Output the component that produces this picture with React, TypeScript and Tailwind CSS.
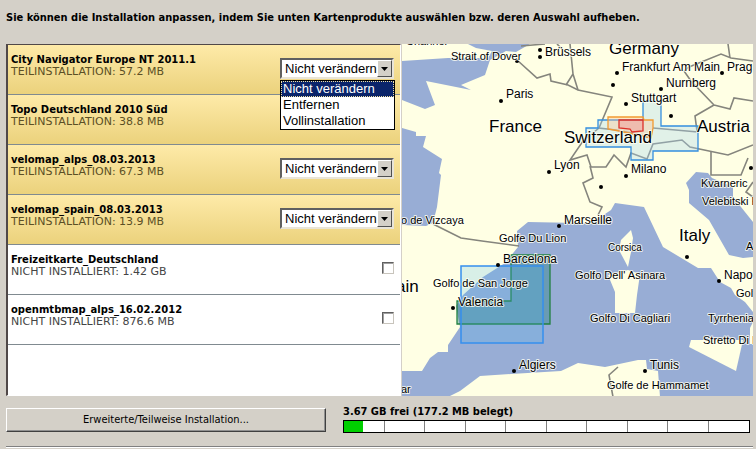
type Product = {
  name: string;
  status: string;
  control: "select" | "checkbox";
  open?: boolean;
};

const products: Product[] = [
  { name: "City Navigator Europe NT 2011.1", status: "TEILINSTALLATION: 57.2 MB", control: "select", open: true },
  { name: "Topo Deutschland 2010 Süd", status: "TEILINSTALLATION: 38.8 MB", control: "select" },
  { name: "velomap_alps_08.03.2013", status: "TEILINSTALLATION: 67.3 MB", control: "select" },
  { name: "velomap_spain_08.03.2013", status: "TEILINSTALLATION: 13.9 MB", control: "select" },
  { name: "Freizeitkarte_Deutschland", status: "NICHT INSTALLIERT: 1.42 GB", control: "checkbox" },
  { name: "openmtbmap_alps_16.02.2012", status: "NICHT INSTALLIERT: 876.6 MB", control: "checkbox" },
];

const actions = ["Nicht verändern", "Entfernen", "Vollinstallation"];

function ActionSelect({ label, open }: { label: string; open?: boolean }) {
  return (
    <div className="relative h-[21px] w-[114px] font-['Liberation_Sans',Arial,sans-serif] text-[13px]">
      <select
        aria-label={label}
        className="block h-full w-full appearance-none rounded-none border-2 border-t-[#606060] border-r-[#e8e4d8] border-b-[#e8e4d8] border-l-[#606060] bg-white pl-[3px] leading-4 text-black"
      >
        {actions.map((a) => (
          <option key={a}>{a}</option>
        ))}
      </select>
      <span className="pointer-events-none absolute top-[2px] right-[2px] bottom-[2px] flex w-[15px] items-center justify-center border border-t-white border-r-[#505050] border-b-[#505050] border-l-white bg-[#d4d0c8]">
        <svg width="7" height="4" viewBox="0 0 7 4" aria-hidden="true">
          <path d="M0 0H7L3.5 4Z" fill="#000" />
        </svg>
      </span>
      {open && (
        <ul role="listbox" aria-label={label} className="absolute top-[22px] left-0 z-10 w-[115px] border border-black bg-white leading-4 text-black">
          {actions.map((a, i) => (
            <li
              key={a}
              role="option"
              aria-selected={i === 0}
              className={i === 0 ? "bg-[#0a246a] pl-[2px] text-white outline-1 -outline-offset-1 outline-dotted outline-[#f0e0a0]" : "pl-[2px]"}
            >
              {a}
            </li>
          ))}
        </ul>
      )}
    </div>
  );
}

function ProductRow({ product }: { product: Product }) {
  const installed = product.control === "select";
  return (
    <li
      className={
        installed
          ? "flex h-[50px] justify-between border-b border-[#808a90] bg-linear-to-b from-[#feeaa8] to-[#ebd27c] pr-[6px] pl-[3px]"
          : "flex h-[50px] justify-between border-b border-[#808a90] bg-white pr-[6px] pl-[3px]"
      }
    >
      <div className="pt-[9px] leading-3">
        <h2 className="text-[10px] leading-3 font-bold text-black">{product.name}</h2>
        <p className={installed ? "text-[11px] leading-3 text-[#5b4f25]" : "text-[11px] leading-3 text-[#444]"}>{product.status}</p>
      </div>
      <div className={installed ? "pt-[13px]" : "pt-[17px]"}>
        {installed ? (
          <ActionSelect label={product.name} open={product.open} />
        ) : (
          <input
            type="checkbox"
            aria-label={product.name}
            className="block size-3 appearance-none border border-t-[#606060] border-r-[#c8c4bc] border-b-[#c8c4bc] border-l-[#606060] bg-white shadow-[inset_1px_1px_0_#a0a0a0]"
          />
        )}
      </div>
    </li>
  );
}

type Label = [text: string, x: number, y: number];

const countryLabels: Label[] = [
  ["Germany", 609, 54], ["France", 489, 132], ["Switzerland", 564, 143],
  ["Austria", 697, 132], ["Italy", 679, 241], ["ain", 396, 292],
];
const cityLabels: Label[] = [
  ["Brüssels", 545, 56], ["Frankfurt Am Main", 622, 71], ["Prag", 727, 71],
  ["Nurnberg", 666, 87], ["Stuttgart", 631, 102], ["Paris", 506, 98],
  ["Lyon", 554, 169], ["Milano", 631, 173], ["Marseille", 564, 224],
  ["Barcelona", 503, 263], ["Valencia", 458, 306], ["Napo", 724, 279],
  ["Algiers", 519, 369], ["Tunis", 650, 369],
];
const seaLabels: Label[] = [
  ["Strait of Dover", 451, 60], ["Channel", 406, 45], ["Kvarneric", 701, 187],
  ["Velebitski K", 702, 205], ["o de Vizcaya", 401, 224], ["Golfe Du Lion", 499, 242],
  ["Golfo de San Jorge", 433, 287], ["A", 746, 250], ["Golfo Dell' Asinara", 575, 279],
  ["Golf", 736, 297], ["Golfo Di Cagliari", 590, 322], ["Tyrrhenian", 708, 322],
  ["Stretto Di M", 703, 344], ["Golfe de Hammamet", 607, 389], ["ar", 401, 393],
];
const dots: [number, number][] = [
  [540, 50], [540, 57], [517, 61], [501, 101], [617, 73], [613, 85], [661, 89],
  [626, 104], [671, 116], [722, 73], [549, 172], [626, 176], [601, 187], [751, 168],
  [559, 226], [498, 265], [453, 308], [514, 371], [645, 371], [687, 257], [719, 281],
];

function CoverageMap() {
  return (
    <svg
      viewBox="402 44 351 352"
      preserveAspectRatio="xMidYMid slice"
      role="img"
      aria-label="Kartenabdeckung"
      className="block h-full w-full bg-[#ffffe4] font-['Liberation_Sans',Arial,sans-serif]"
    >
      <g fill="#98add5">
        <path d="M402 61L448 58L488 58L492 51L476 48L468 44H530L516 52L506 51L490 60L485 75L461 85L471 90L426 81L435 105L425 109L402 100Z" />
        <path d="M402 128L416 132V136H426L423 147L442 159L439 173L441 175L437 207L433 223L426 226L402 225Z" />
        <path d="M578 223L528 222L517 231L518 247L505 263L483 277L463 295L456 306L460 327L448 345V352H438L430 358L422 371H402V397H448L460 391L480 376L511 374L561 371L578 363L605 367L638 360H646L647 369L658 371L660 397H753V312L745 302L735 295L731 288L720 282L711 268H698L663 247L644 207L615 203L611 210L602 216L590 224Z" />
        <path d="M686 183L696 172L708 173L712 178L733 187V197L753 222V257L743 258L729 255L709 220L689 203V190Z" />
      </g>
      <g fill="#ffffe4">
        <path d="M631 230L633 238L631 252L628 267L619 250L621 240Z" />
        <path d="M608 275L628 270L640 274L637 295L635 313H615V292Z" />
        <path d="M691 340H743L736 371L689 347Z" />
        <path d="M753 322L750 328V344H753Z" />
      </g>
      <g fill="none" stroke="#85857d" strokeWidth="1.6">
        <path d="M517 60L537 78L550 74L551 81L568 85L578 90L612 97L599 128L616 130L632 133L651 138" />
        <path d="M521 46L545 44M557 44L562 49M570 44L573 74L566 85M573 74L578 90" />
        <path d="M728 44L730 58M684 71L689 67L721 54L731 58L753 61M684 71L691 81L714 105L695 116L697 131M714 105L730 109L734 98L753 101" />
        <path d="M653 128L698 132M599 128L583 141L570 160L587 155L591 167H606L614 155L626 167L631 153L647 159L653 144L682 140L690 147L728 155L753 145" />
        <path d="M711 152V175H741L748 158M753 182L746 192L753 197M590 166L593 178L583 183L590 202L602 207L598 215" />
        <path d="M433 224L461 238L482 241L519 246M618 367L609 375L613 397" />
      </g>
      <path d="M643 101H661V126H698V151H653V160H631V147H586V128H598V120H643Z" fill="#a8d8f0" fillOpacity=".35" stroke="#358fde" strokeWidth="1.3" />
      <path d="M608 117H643L644 120H653V128L651 138L619 131L608 129Z" fill="#ffc090" fillOpacity=".35" stroke="#f29a32" strokeWidth="1.3" />
      <path d="M619 120H643V131L632 132L630 129L619 128Z" fill="#f49090" fillOpacity=".45" stroke="#dc3028" strokeWidth="1.3" />
      <path d="M511 255H550V324H457V301H511Z" fill="#268080" fillOpacity=".4" stroke="#208040" strokeWidth="1.3" />
      <rect x="461" y="266" width="82" height="77" fill="#4db4f0" fillOpacity=".22" stroke="#358fee" strokeWidth="1.5" />
      {dots.map(([x, y]) => (
        <circle key={`${x}-${y}`} cx={x} cy={y} r="2" />
      ))}
      <g stroke="#fffff4" strokeWidth="2" strokeOpacity=".8" strokeLinejoin="round" className="[paint-order:stroke]">
        <g fontSize="17">
          {countryLabels.map(([t, x, y]) => (
            <text key={t} x={x} y={y}>{t}</text>
          ))}
        </g>
        <g fontSize="12">
          {cityLabels.map(([t, x, y]) => (
            <text key={t} x={x} y={y}>{t}</text>
          ))}
        </g>
        <g fontSize="11">
          {seaLabels.map(([t, x, y]) => (
            <text key={t} x={x} y={y}>{t}</text>
          ))}
        </g>
        <text x="608" y="251" fontSize="10">Corsica</text>
      </g>
    </svg>
  );
}

export default function App() {
  return (
    <main className="min-h-screen bg-[#d4d0c8] pr-[3px] pl-[6px] font-['DejaVu_Sans',Verdana,sans-serif] text-black">
      <h1 className="pt-[10px] pb-[18px] font-['DejaVu_Sans_Condensed',Tahoma,sans-serif] text-[11px] leading-4 font-bold">
        Sie können die Installation anpassen, indem Sie unten Kartenprodukte auswählen bzw. deren Auswahl aufheben.
      </h1>
      <div className="grid h-[352px] grid-cols-[395px_minmax(0,1fr)] gap-px">
        <ul className="border-t border-r border-b border-l-2 border-t-[#504848] border-r-white border-b-white border-l-[#504848] bg-white">
          {products.map((p) => (
            <ProductRow key={p.name} product={p} />
          ))}
        </ul>
        <div className="overflow-hidden">
          <CoverageMap />
        </div>
      </div>
      <div className="grid grid-cols-[320px_minmax(0,1fr)] gap-[17px] pt-2 pr-[3px] font-['DejaVu_Sans_Condensed',Tahoma,sans-serif] text-[11px]">
        <button
          type="button"
          className="mt-1 h-6 border border-t-white border-r-[#404040] border-b-[#404040] border-l-white bg-[#d4d0c8] shadow-[inset_-1px_-1px_0_#909090]"
        >
          Erweiterte/Teilweise Installation...
        </button>
        <div>
          <p id="space" className="pb-px leading-[15px] font-bold">3.67 GB frei (177.2 MB belegt)</p>
          <div
            role="meter"
            aria-labelledby="space"
            aria-valuenow={4.6}
            aria-valuemin={0}
            aria-valuemax={100}
            className="relative border border-black bg-white"
          >
            <div className="grid h-[11px] grid-cols-10 divide-x divide-[#808080]">
              {Array.from({ length: 10 }, (_, i) => (
                <span key={i} />
              ))}
            </div>
            <span className="absolute inset-y-0 left-0 bg-[#00d000]" style={{ width: "4.6%" }} />
          </div>
        </div>
      </div>
      <hr className="mt-[13px] h-[2px] border-t border-b border-t-[#808080] border-b-white" />
    </main>
  );
}
